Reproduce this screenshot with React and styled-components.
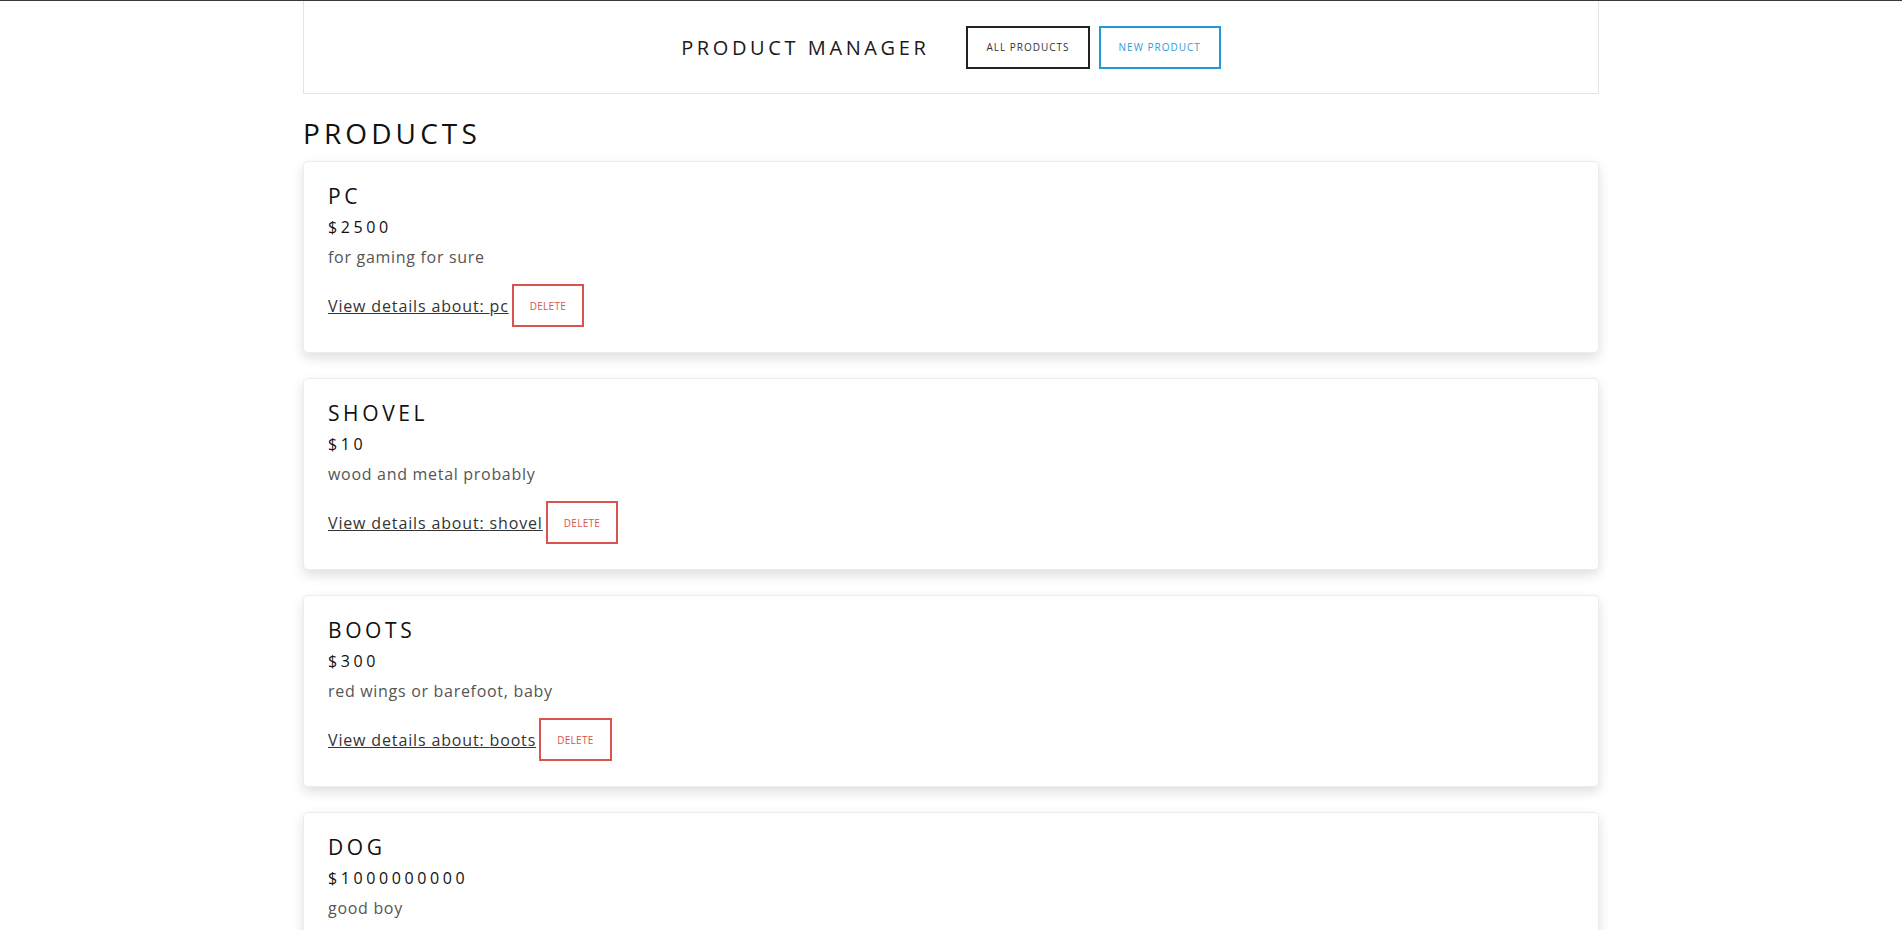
import { useState } from "react";
import styled, { createGlobalStyle } from "styled-components";

const GlobalStyle = createGlobalStyle`
  * {
    box-sizing: border-box;
  }
  html,
  body {
    margin: 0;
    padding: 0;
    background: #ffffff;
    font-family: "Open Sans", "Noto Sans", Arial, sans-serif;
    color: #1a1a1a;
  }
`;

// Styled Components
const TopRule = styled.div`
  height: 1px;
  background: #3a3a3a;
`;

const Page = styled.div`
  width: 1296px;
  margin: 0 auto;
  padding-bottom: 40px;
`;

const Header = styled.header`
  display: flex;
  justify-content: center;
  align-items: center;
  gap: 37px;
  height: 93px;
  border: 1px solid #e4e4e4;
  border-top: none;
`;

const Brand = styled.h2`
  margin: 0;
  font-size: 20px;
  font-weight: 400;
  letter-spacing: 3.6px;
  color: #1a1a1a;
`;

const Nav = styled.nav`
  display: flex;
  gap: 9px;
`;

const NavButton = styled.button`
  height: 43px;
  padding: 0 18px;
  background: white;
  font-family: inherit;
  font-size: 10px;
  letter-spacing: 1px;
  text-transform: uppercase;
  cursor: pointer;
  border: 2px solid ${({ $variant }) => ($variant === "new" ? "#1e9bd7" : "#222")};
  color: ${({ $variant }) => ($variant === "new" ? "#2f9ad6" : "#333")};
`;

const Heading = styled.h1`
  margin: 22px 0 11px;
  font-size: 28px;
  line-height: 34px;
  font-weight: 400;
  letter-spacing: 4.1px;
  color: #111;
`;

const List = styled.div`
  display: flex;
  flex-direction: column;
  gap: 25px;
`;

const Card = styled.div`
  display: flex;
  flex-direction: column;
  background: white;
  border: 1px solid #ececec;
  border-radius: 5px;
  padding: 22px 24px 25px;
  box-shadow: 0 5px 12px rgba(0, 0, 0, 0.13);
`;

const Title = styled.h3`
  margin: 0;
  font-size: 21px;
  line-height: 24px;
  font-weight: 400;
  letter-spacing: 3.6px;
  text-transform: uppercase;
  color: #111;
`;

const Price = styled.p`
  margin: 9px 0 0;
  font-size: 16px;
  line-height: 20px;
  font-weight: 500;
  letter-spacing: 3.6px;
  color: #111;
`;

const Description = styled.p`
  margin: 10px 0 0;
  font-size: 16px;
  line-height: 20px;
  letter-spacing: 0.7px;
  color: #555;
`;

const Actions = styled.div`
  display: flex;
  align-items: center;
  gap: 3px;
  margin-top: 17px;
`;

const DetailLink = styled.a`
  font-size: 16px;
  line-height: 20px;
  letter-spacing: 0.85px;
  color: #333;
  text-decoration: underline;
  cursor: pointer;
`;

const DeleteButton = styled.button`
  height: 43px;
  padding: 0 16px;
  background: white;
  border: 2px solid #d9534f;
  color: #d9534f;
  font-family: inherit;
  font-size: 10px;
  letter-spacing: 0.3px;
  text-transform: uppercase;
  cursor: pointer;
`;

const initialProducts = [
  { id: "1", name: "pc", price: 2500, description: "for gaming for sure" },
  { id: "2", name: "shovel", price: 10, description: "wood and metal probably" },
  { id: "3", name: "boots", price: 300, description: "red wings or barefoot, baby" },
  { id: "4", name: "dog", price: 1000000000, description: "good boy" },
];

const ProductCard = ({ product, onDelete }) => (
  <Card>
    <Title>{product.name}</Title>
    <Price>${product.price}</Price>
    <Description>{product.description}</Description>
    <Actions>
      <DetailLink>View details about: {product.name}</DetailLink>
      <DeleteButton onClick={() => onDelete(product.id)}>Delete</DeleteButton>
    </Actions>
  </Card>
);

export default function App() {
  const [products, setProducts] = useState(initialProducts);

  const handleDelete = (id) => {
    setProducts(products.filter((p) => p.id !== id));
  };

  return (
    <>
      <GlobalStyle />
      <TopRule />
      <Page>
        <Header>
          <Brand>PRODUCT MANAGER</Brand>
          <Nav>
            <NavButton>All Products</NavButton>
            <NavButton $variant="new">New Product</NavButton>
          </Nav>
        </Header>
        <Heading>PRODUCTS</Heading>
        <List>
          {products.map((p) => (
            <ProductCard key={p.id} product={p} onDelete={handleDelete} />
          ))}
        </List>
      </Page>
    </>
  );
}
